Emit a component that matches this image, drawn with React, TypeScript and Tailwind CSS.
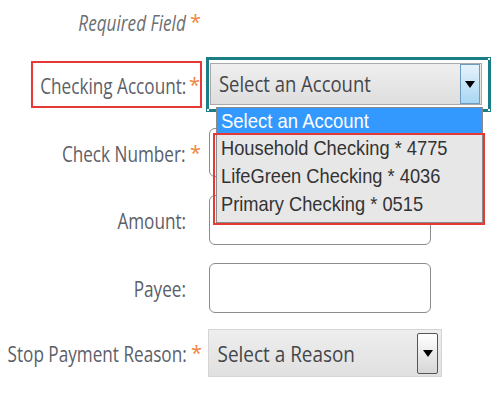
import React from "react";

function Star() {
  return <span className="w-[16px] pl-[4px] text-[20px] text-[#f0843c] leading-none">*</span>;
}

function Label({ text, star }: { text: string; star?: boolean }) {
  return (
    <div className="w-[202px] flex justify-end items-center">
      <span className="inline-block origin-right scale-x-[0.78] text-[22px] text-[#5b6068] whitespace-nowrap leading-none">{text}</span>
      {star ? <Star /> : <span className="w-[16px]" />}
    </div>
  );
}

function Arrow() {
  return (
    <svg width="10" height="7" viewBox="0 0 10 7">
      <path d="M0 0 L10 0 L5 7 Z" fill="#000" />
    </svg>
  );
}

export default function App() {
  return (
    <div className="w-[500px] h-[400px] bg-white overflow-hidden font-['Open_Sans',sans-serif]">
      {/* Required field */}
      <div className="flex h-[44px] items-center">
        <div className="w-[202px] flex justify-end items-center">
          <span className="inline-block origin-right scale-x-[0.78] italic text-[22px] text-[#6b6e73] whitespace-nowrap leading-none">Required Field</span>
          <Star />
        </div>
      </div>

      {/* Checking account */}
      <div className="flex mt-[13px] h-[55px] items-center">
        <div className="w-[202px] pl-[31px] flex items-center">
          <div className="w-[171px] h-[47px] border-2 border-[#e53935] flex justify-end items-center">
            <span className="inline-block origin-right scale-x-[0.78] text-[22px] text-[#5b6068] whitespace-nowrap leading-none">Checking Account:</span>
            <span className="w-[14px] pl-[3px] text-[20px] text-[#f0843c] leading-none">*</span>
          </div>
        </div>
        <div className="relative ml-[4px] w-[285px] h-[55px] border-[3px] border-[#1b7d86] pl-[1px] pt-[3px] pr-[6px] pb-[1px]">
          <div className="absolute -top-[2px] -right-[2px] w-[2px] h-[2px] bg-white" />
          <div className="absolute -bottom-[2px] -right-[2px] w-[2px] h-[2px] bg-white" />
          <div className="absolute -bottom-[2px] -left-[2px] w-[2px] h-[2px] bg-white" />
          <div className="h-[42px] w-[272px] border border-[#a9a9a9] bg-gradient-to-b from-[#efefef] to-[#dedede] flex items-center">
            <span className="flex-1 pl-[9px] inline-block origin-left scale-x-[0.88] text-[21px] text-[#44464a] whitespace-nowrap leading-none">Select an Account</span>
            <div className="w-[20px] h-full border border-[#6c9cc0] bg-gradient-to-b from-[#e6f3fc] to-[#a9d6f3] flex items-center justify-center mr-[1px]">
              <Arrow />
            </div>
          </div>

          {/* Dropdown list */}
          <div className="absolute left-[7px] top-[47px] w-[267px] h-[116px] bg-[#e7e7e7] border border-[#8a8a8a] z-10 font-['Liberation_Sans',Arial,sans-serif]">
            <div className="h-[25px] bg-[#3399ff] flex items-center pl-[4px]">
              <span className="inline-block origin-left scale-x-[0.88] text-[21px] text-white whitespace-nowrap leading-none">Select an Account</span>
            </div>
            {["Household Checking * 4775", "LifeGreen Checking * 4036", "Primary Checking * 0515"].map((t) => (
              <div key={t} className="h-[28px] flex items-center pl-[4px]">
                <span className="inline-block origin-left scale-x-[0.87] text-[21px] text-[#333333] whitespace-nowrap leading-none">{t}</span>
              </div>
            ))}
          </div>
          <div className="absolute left-[4px] top-[73px] w-[272px] h-[92px] border-2 border-[#e53935] z-20" />
        </div>
      </div>

      {/* Check Number */}
      <div className="flex mt-[16px] h-[49px] items-center">
        <Label text="Check Number:" star />
        <div className="ml-[7px] w-[222px] h-[49px] border-[1.5px] border-[#8c8c8c] rounded-[6px] bg-white" />
      </div>

      {/* Amount */}
      <div className="flex mt-[18px] h-[50px] items-center">
        <Label text="Amount:" />
        <div className="ml-[7px] w-[222px] h-[50px] border-[1.5px] border-[#8c8c8c] rounded-[6px] bg-white" />
      </div>

      {/* Payee */}
      <div className="flex mt-[18px] h-[50px] items-center">
        <Label text="Payee:" />
        <div className="ml-[7px] w-[222px] h-[50px] border-[1.5px] border-[#8c8c8c] rounded-[6px] bg-white" />
      </div>

      {/* Stop Payment Reason */}
      <div className="flex mt-[16px] h-[48px] items-center">
        <Label text="Stop Payment Reason:" star />
        <div className="ml-[6px] w-[234px] h-[48px] border border-[#d4d4d4] bg-gradient-to-b from-[#eeeeee] to-[#e0e0e0] flex items-center">
          <span className="flex-1 pl-[10px] inline-block origin-left scale-x-[0.86] text-[22px] text-[#44464a] whitespace-nowrap leading-none">Select a Reason</span>
          <div className="w-[21px] h-[41px] mr-[3px] border-[1.5px] border-[#555] rounded-[2px] bg-gradient-to-b from-[#ffffff] to-[#d6d6d6] flex items-center justify-center">
            <Arrow />
          </div>
        </div>
      </div>
    </div>
  );
}
